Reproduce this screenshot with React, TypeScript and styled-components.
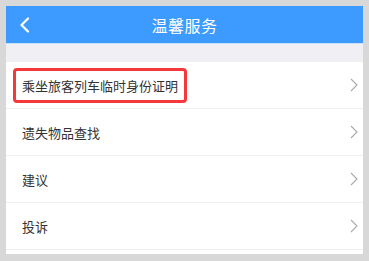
import styled, { createGlobalStyle } from 'styled-components'

const GlobalStyle = createGlobalStyle`
  body {
    margin: 0;
    background: #d8d8d8;
    font-family: "Noto Sans CJK SC", "Noto Sans", sans-serif;
  }
`

const items = [
  { label: '乘坐旅客列车临时身份证明', marked: true },
  { label: '遗失物品查找' },
  { label: '建议' },
  { label: '投诉' },
]

// 页面
const App = () => {
  return (
    <>
      <GlobalStyle />
      <Screen>
        <Header>
          <BackButton>
            <svg width="12" height="16" viewBox="0 0 12 16">
              <path d="M9 1.5 L2.5 8 L9 14.5" fill="none" stroke="#fff" strokeWidth="2.2" strokeLinecap="round" strokeLinejoin="round" />
            </svg>
          </BackButton>
          <Title>温馨服务</Title>
        </Header>
        <Spacer />
        <List>
          {items.map((item) => (
            <Row key={item.label}>
              <Label>{item.label}</Label>
              <svg width="8" height="14" viewBox="0 0 8 14">
                <path d="M1 1 L7 7 L1 13" fill="none" stroke="#aaa" strokeWidth="1.1" />
              </svg>
              {item.marked && <Mark />}
            </Row>
          ))}
        </List>
      </Screen>
    </>
  )
}

// 样式
const Screen = styled.div`
  margin: 6px;
  width: 357px;
  height: 248px;
  background: #fff;
  overflow: hidden;
`

const Header = styled.header`
  position: relative;
  height: 37px;
  background: #3d9bff;
  border-bottom: 1px solid #c9e1fc;
  display: flex;
  align-items: center;
  justify-content: center;
`

const BackButton = styled.div`
  position: absolute;
  left: 13px;
  top: 11px;
  display: flex;
`

const Title = styled.h1`
  margin: 0;
  font-size: 16px;
  font-weight: 400;
  color: #fff;
  letter-spacing: 0.5px;
`

const Spacer = styled.div`
  height: 18px;
  background: #efeff4;
`

const List = styled.ul`
  margin: 0;
  padding: 0;
  list-style: none;
`

const Row = styled.li`
  position: relative;
  height: 46px;
  padding: 0 5px 0 16px;
  display: flex;
  align-items: center;
  justify-content: space-between;
  border-bottom: 1px solid #efefef;
`

const Label = styled.span`
  font-size: 13px;
  color: #333;
`

const Mark = styled.div`
  position: absolute;
  left: 7px;
  top: 6px;
  width: 174px;
  height: 35px;
  box-sizing: border-box;
  border: 3px solid #f5383b;
  border-radius: 4px;
`

export default App
